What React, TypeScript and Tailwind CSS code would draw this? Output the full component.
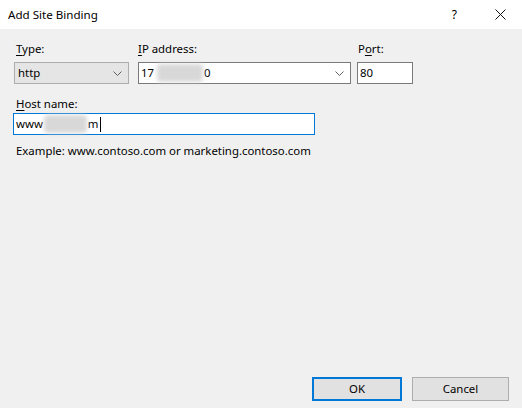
import React from 'react';

const font = "font-['Segoe_UI','Noto_Sans','Liberation_Sans',sans-serif]";

function Chevron() {
  return (
    <svg width="9" height="5" viewBox="0 0 9 5" className="shrink-0">
      <path d="M0.5 0.5L4.5 4.5L8.5 0.5" fill="none" stroke="#606060" strokeWidth="1" />
    </svg>
  );
}

function Blur({ w }: { w: number }) {
  return (
    <span
      className="inline-block h-[18px] rounded-sm bg-[#d8d8d8] blur-[2px]"
      style={{ width: w }}
    />
  );
}

export default function App() {
  return (
    <div className={`${font} flex h-[408px] w-[522px] flex-col bg-[#f0f0f0] text-[11.4px] text-black`}>
      {/* Title bar */}
      <div className="flex h-[29px] items-center bg-white pl-2 pr-4">
        <span className="flex-1 text-[11.6px] leading-4">Add Site Binding</span>
        <span className="mr-[38px] text-[12px] leading-4">?</span>
        <svg width="11" height="11" viewBox="0 0 11 11">
          <path d="M0.5 0.5L10.5 10.5M10.5 0.5L0.5 10.5" stroke="#111" strokeWidth="1" />
        </svg>
      </div>

      <div className="flex flex-1 flex-col pl-[14px] pr-[13px] pt-3">
        {/* Type / IP / Port */}
        <div className="flex">
          <div className="flex w-[115px] flex-col">
            <span className="pl-[2px] leading-4">
              <span className="underline underline-offset-2">T</span>ype:
            </span>
            <div className="mt-[5px] flex h-[22px] items-center justify-between border border-[#adadad] bg-[#e5e5e5] pl-[3px] pr-[6px]">
              <span>http</span>
              <Chevron />
            </div>
          </div>

          <div className="ml-[9px] flex w-[213px] flex-col">
            <span className="leading-4">
              <span className="underline underline-offset-2">I</span>P address:
            </span>
            <div className="mt-[5px] flex h-[22px] items-center border border-[#7a7a7a] bg-white pl-[2px] pr-[6px]">
              <span>17</span>
              <span className="ml-[3px] flex items-center">
                <Blur w={46} />
              </span>
              <span className="ml-px">0</span>
              <span className="flex-1" />
              <Chevron />
            </div>
          </div>

          <div className="ml-[6px] flex w-[56px] flex-col">
            <span className="pl-px leading-4">
              P<span className="underline underline-offset-2">o</span>rt:
            </span>
            <div className="mt-[5px] flex h-[22px] items-center border border-[#7a7a7a] bg-white pl-[2px]">
              80
            </div>
          </div>
        </div>

        {/* Host name */}
        <span className="mt-[12px] pl-[2px] leading-4">
          <span className="underline underline-offset-2">H</span>ost name:
        </span>
        <div className="ml-[-1px] mt-[1px] flex h-[22px] w-[302px] items-center border border-[#0078d7] bg-white pl-[2px]">
          <span>www</span>
          <span className="ml-px flex items-center">
            <Blur w={43} />
          </span>
          <span className="ml-px">m</span>
          <span className="ml-px h-[15px] w-px bg-black" />
        </div>
        <span className="mt-[8px] pl-[2px] leading-4">Example: www.contoso.com or marketing.contoso.com</span>

        {/* Buttons */}
        <div className="mb-[7px] mt-auto flex justify-end gap-[10px]">
          <button className="h-6 w-[90px] border-2 border-[#0078d7] bg-[#e1e1e1] leading-4">OK</button>
          <button className="h-6 w-[97px] border border-[#adadad] bg-[#e1e1e1] leading-4">Cancel</button>
        </div>
      </div>
    </div>
  );
}
